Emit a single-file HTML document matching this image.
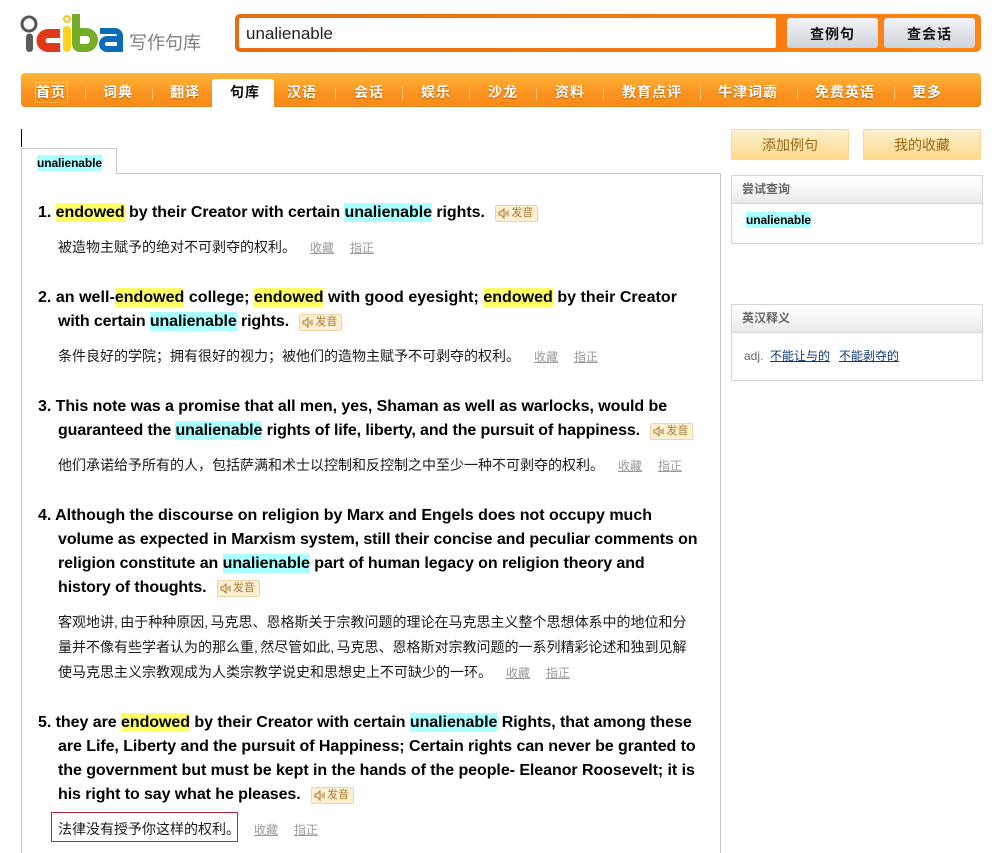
<!DOCTYPE html>
<html><head><meta charset="utf-8"><style>
html,body{margin:0;padding:0;background:#fff}
body{width:998px;height:853px;overflow:hidden;position:relative;font-family:"Liberation Sans","WenQuanYi Zen Hei","Noto Sans CJK SC",sans-serif}
.a{position:absolute;white-space:nowrap}
.n{top:83px;line-height:18px;font-size:14px;font-weight:bold;color:#fff;letter-spacing:1px;text-shadow:0 1px 1px #b35f00}
.s{top:87px;width:1px;height:13px;background:#fdc87c}
.l{left:38px;font-size:16px;font-weight:bold;line-height:24px;height:24px;color:#000;letter-spacing:-.085px}
.l.c{left:58px}
.y{background:#ffff66;padding:1px 0}
.b{background:#aaffff;padding:1px 0}
.v{display:inline-block;position:relative;vertical-align:1px;margin-left:6px;width:41px;height:15px;border:1px solid #ecd6a6;border-radius:2px;background:#fdf0d2;font-size:11px;font-weight:normal;line-height:15px;color:#a87a34;letter-spacing:0;text-indent:15px}
.v svg{position:absolute;left:2px;top:2px}
.z{left:58px;font-size:14px;line-height:20px;color:#1a1a1a;word-spacing:-1.5px}
.k{font-size:12px;line-height:20px;color:#999;text-decoration:underline}
.p{border:1px solid #d6d6d6;background:#fff;box-sizing:border-box;left:731px;width:252px}
.h{position:absolute;left:0;top:0;right:0;height:27px;border-bottom:1px solid #d6d6d6;background:linear-gradient(#fff 0,#f9f9f9 40%,#e9e9e9 100%);font-size:12px;font-weight:bold;line-height:27px;color:#666;padding-left:10px}
.t{top:129px;height:31px;width:118px;box-sizing:border-box;border:1px solid #f6d898;border-radius:2px;background:linear-gradient(#fdf0d0,#fdd98a);font-size:14px;line-height:30px;color:#9b6512;text-align:center}
.q{top:18px;width:91px;height:30px;background:linear-gradient(#f3f4f7,#cfd3db);border-radius:3px;text-align:center;font-size:14px;font-weight:bold;line-height:32px;color:#111;letter-spacing:1px}
</style></head><body>
<svg class="a" style="left:18px;top:10px" width="110" height="46" viewBox="18 10 110 46">
<circle cx="29" cy="24" r="7" fill="#fff" stroke="#555" stroke-width="3"/>
<path d="M25 21a5 5 0 0 1 6-2" fill="none" stroke="#ccc" stroke-width="1.500"/>
<path d="M29.500 37V48.500" stroke="#5b5b5b" stroke-width="7" stroke-linecap="round" fill="none"/>
<path d="M60 33.500H48a7 7 0 0 0 0 14H60" stroke="#e0381a" stroke-width="9" fill="none"/>
<path d="M67 30V48" stroke="#ffd21e" stroke-width="8" stroke-linecap="round" fill="none"/>
<circle cx="67" cy="19" r="3" fill="#fff" stroke="#f4c81e" stroke-width="2"/>
<path d="M76 14V44a4 4 0 0 0 4 4H86a8 8 0 0 0 0-16H76" stroke="#76ad28" stroke-width="8" fill="none"/>
<path d="M100 31H115a5 5 0 0 1 5 5V49H107a5 5 0 0 1 0-10H120" stroke="#0c6cb8" stroke-width="6" fill="none"/>
</svg>
<div class="a" style="left:129px;top:32px;font-size:18px;line-height:22px;color:#7f7f7f">写作句库</div>

<div class="a" style="left:235px;top:14px;width:746px;height:38px;border-radius:5px;background:linear-gradient(90deg,#e96a10,#ff8412)"></div>
<div class="a" style="left:239px;top:18px;width:537px;height:30px;background:#fff;border-radius:2px;font-size:17px;line-height:31px;color:#222;text-indent:7px">unalienable</div>
<div class="a q" style="left:787px">查例句</div>
<div class="a q" style="left:884px">查会话</div>

<div class="a" style="left:21px;top:73px;width:960px;height:34px;border-radius:4px;background:linear-gradient(#ffb638,#fb9220 60%,#f68a18);box-shadow:inset 0 -1px 0 #e58518"></div>
<div class="a" style="left:212px;top:79px;width:62px;height:30px;background:#fff;border-radius:3px 3px 0 0"></div>
<div class="a" style="left:35px;top:82px;width:31px;height:19px;border:1px dotted #ffe9b0"></div>
<div class="a n" style="left:36px">首页</div>
<div class="a s" style="left:85px"></div>
<div class="a n" style="left:103px">词典</div>
<div class="a s" style="left:152px"></div>
<div class="a n" style="left:170px">翻译</div>
<div class="a n" style="left:230px;color:#111;text-shadow:none">句库</div>
<div class="a n" style="left:287px">汉语</div>
<div class="a s" style="left:335px"></div>
<div class="a n" style="left:354px">会话</div>
<div class="a s" style="left:402px"></div>
<div class="a n" style="left:421px">娱乐</div>
<div class="a s" style="left:469px"></div>
<div class="a n" style="left:488px">沙龙</div>
<div class="a s" style="left:536px"></div>
<div class="a n" style="left:555px">资料</div>
<div class="a s" style="left:603px"></div>
<div class="a n" style="left:622px">教育点评</div>
<div class="a s" style="left:700px"></div>
<div class="a n" style="left:718px">牛津词霸</div>
<div class="a s" style="left:797px"></div>
<div class="a n" style="left:815px">免费英语</div>
<div class="a s" style="left:894px"></div>
<div class="a n" style="left:912px">更多</div>

<div class="a" style="left:21px;top:129px;width:1px;height:18px;background:#000"></div>
<div class="a" style="left:21px;top:148px;width:1px;height:705px;background:#c8c8c8"></div>
<div class="a" style="left:21px;top:148px;width:95px;height:1px;background:#c8c8c8"></div>
<div class="a" style="left:116px;top:148px;width:1px;height:26px;background:#c8c8c8"></div>
<div class="a" style="left:116px;top:173px;width:605px;height:1px;background:#c8c8c8"></div>
<div class="a" style="left:720px;top:173px;width:1px;height:680px;background:#c8c8c8"></div>
<div class="a" style="left:37px;top:155px;font-size:12px;font-weight:bold;line-height:16px;background:#aaffff;color:#000;letter-spacing:-.1px">unalienable</div>

<div class="a l" style="top:201px;letter-spacing:-.05px">1. <span class="y">endowed</span> by their Creator with certain <span class="b">unalienable</span> rights. <span class="v"><svg width="13" height="11" viewBox="0 0 13 11"><path d="M1 4H3L6 1V10L3 7H1Z" fill="none" stroke="#a87a34"/><path d="M8 3.500V7.500M10 2.500V8.500" stroke="#a87a34"/></svg>发音</span></div>
<div class="a z" style="top:237px">被造物主赋予的绝对不可剥夺的权利。</div>
<div class="a k" style="left:310px;top:238px">收藏</div><div class="a k" style="left:350px;top:238px">指正</div>

<div class="a l" style="top:286px;letter-spacing:.03px">2. an well-<span class="y">endowed</span> college; <span class="y">endowed</span> with good eyesight; <span class="y">endowed</span> by their Creator</div>
<div class="a l c" style="top:310px;letter-spacing:-.115px">with certain <span class="b">unalienable</span> rights. <span class="v"><svg width="13" height="11" viewBox="0 0 13 11"><path d="M1 4H3L6 1V10L3 7H1Z" fill="none" stroke="#a87a34"/><path d="M8 3.500V7.500M10 2.500V8.500" stroke="#a87a34"/></svg>发音</span></div>
<div class="a z" style="top:346px">条件良好的学院；拥有很好的视力；被他们的造物主赋予不可剥夺的权利。</div>
<div class="a k" style="left:534px;top:347px">收藏</div><div class="a k" style="left:574px;top:347px">指正</div>

<div class="a l" style="top:395px;letter-spacing:-.06px">3. This note was a promise that all men, yes, Shaman as well as warlocks, would be</div>
<div class="a l c" style="top:419px;letter-spacing:-.11px">guaranteed the <span class="b">unalienable</span> rights of life, liberty, and the pursuit of happiness. <span class="v"><svg width="13" height="11" viewBox="0 0 13 11"><path d="M1 4H3L6 1V10L3 7H1Z" fill="none" stroke="#a87a34"/><path d="M8 3.500V7.500M10 2.500V8.500" stroke="#a87a34"/></svg>发音</span></div>
<div class="a z" style="top:455px">他们承诺给予所有的人，包括萨满和术士以控制和反控制之中至少一种不可剥夺的权利。</div>
<div class="a k" style="left:618px;top:456px">收藏</div><div class="a k" style="left:658px;top:456px">指正</div>

<div class="a l" style="top:504px;letter-spacing:-.02px">4. Although the discourse on religion by Marx and Engels does not occupy much</div>
<div class="a l c" style="top:528px">volume as expected in Marxism system, still their concise and peculiar comments on</div>
<div class="a l c" style="top:552px;letter-spacing:-.07px">religion constitute an <span class="b">unalienable</span> part of human legacy on religion theory and</div>
<div class="a l c" style="top:576px">history of thoughts. <span class="v"><svg width="13" height="11" viewBox="0 0 13 11"><path d="M1 4H3L6 1V10L3 7H1Z" fill="none" stroke="#a87a34"/><path d="M8 3.500V7.500M10 2.500V8.500" stroke="#a87a34"/></svg>发音</span></div>
<div class="a z" style="top:612px">客观地讲, 由于种种原因, 马克思、恩格斯关于宗教问题的理论在马克思主义整个思想体系中的地位和分</div>
<div class="a z" style="top:637px">量并不像有些学者认为的那么重, 然尽管如此, 马克思、恩格斯对宗教问题的一系列精彩论述和独到见解</div>
<div class="a z" style="top:662px">使马克思主义宗教观成为人类宗教学说史和思想史上不可缺少的一环。</div>
<div class="a k" style="left:506px;top:663px">收藏</div><div class="a k" style="left:546px;top:663px">指正</div>

<div class="a l" style="top:711px;letter-spacing:-.05px">5. they are <span class="y">endowed</span> by their Creator with certain <span class="b">unalienable</span> Rights, that among these</div>
<div class="a l c" style="top:735px;letter-spacing:-.06px">are Life, Liberty and the pursuit of Happiness; Certain rights can never be granted to</div>
<div class="a l c" style="top:759px;letter-spacing:-.06px">the government but must be kept in the hands of the people- Eleanor Roosevelt; it is</div>
<div class="a l c" style="top:783px">his right to say what he pleases. <span class="v"><svg width="13" height="11" viewBox="0 0 13 11"><path d="M1 4H3L6 1V10L3 7H1Z" fill="none" stroke="#a87a34"/><path d="M8 3.500V7.500M10 2.500V8.500" stroke="#a87a34"/></svg>发音</span></div>
<div class="a" style="left:51px;top:812px;width:185px;height:28px;border:1px solid #b8273a"></div>
<div class="a z" style="top:819px">法律没有授予你这样的权利。</div>
<div class="a k" style="left:254px;top:820px">收藏</div><div class="a k" style="left:294px;top:820px">指正</div>

<div class="a t" style="left:731px">添加例句</div>
<div class="a t" style="left:863px">我的收藏</div>

<div class="a p" style="top:175px;height:69px"><div class="h">尝试查询</div></div>
<div class="a" style="left:746px;top:212px;font-size:12px;font-weight:bold;line-height:16px;background:#aaffff;color:#000;letter-spacing:-.1px">unalienable</div>
<div class="a p" style="top:304px;height:77px"><div class="h">英汉释义</div></div>
<div class="a" style="left:744px;top:346px;font-size:12px;line-height:20px;color:#666">adj.</div>
<div class="a" style="left:770px;top:346px;font-size:12px;line-height:20px;color:#0f3a78;text-decoration:underline">不能让与的</div>
<div class="a" style="left:839px;top:346px;font-size:12px;line-height:20px;color:#0f3a78;text-decoration:underline">不能剥夺的</div>
</body></html>
